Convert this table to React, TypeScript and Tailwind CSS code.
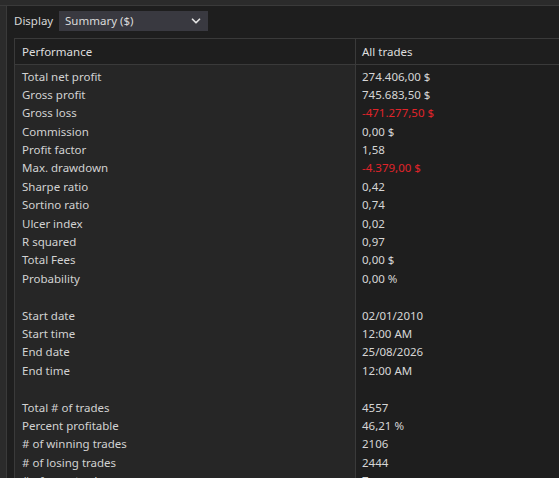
import { ChevronDown } from 'lucide-react';

type Row = { label: string; value: string; neg?: boolean } | null;

const rows: Row[] = [
  { label: 'Total net profit', value: '274.406,00 $' },
  { label: 'Gross profit', value: '745.683,50 $' },
  { label: 'Gross loss', value: '-471.277,50 $', neg: true },
  { label: 'Commission', value: '0,00 $' },
  { label: 'Profit factor', value: '1,58' },
  { label: 'Max. drawdown', value: '-4.379,00 $', neg: true },
  { label: 'Sharpe ratio', value: '0,42' },
  { label: 'Sortino ratio', value: '0,74' },
  { label: 'Ulcer index', value: '0,02' },
  { label: 'R squared', value: '0,97' },
  { label: 'Total Fees', value: '0,00 $' },
  { label: 'Probability', value: '0,00 %' },
  null,
  { label: 'Start date', value: '02/01/2010' },
  { label: 'Start time', value: '12:00 AM' },
  { label: 'End date', value: '25/08/2026' },
  { label: 'End time', value: '12:00 AM' },
  null,
  { label: 'Total # of trades', value: '4557' },
  { label: 'Percent profitable', value: '46,21 %' },
  { label: '# of winning trades', value: '2106' },
  { label: '# of losing trades', value: '2444' },
  { label: '# of even trades', value: '7' },
];

export default function App() {
  return (
    <div
      className="w-[559px] h-[478px] overflow-hidden bg-[#2b2b2b] text-[11.5px] flex flex-col"
      style={{ fontFamily: '"Noto Sans", "Open Sans", sans-serif' }}
    >
      {/* top strip */}
      <div className="h-[6px] shrink-0 border-b border-[#3a3a3a]" />
      <div className="flex flex-1 min-h-0">
        <div className="w-[7px] shrink-0 border-r border-[#3a3a3a]" />
        <div className="flex-1 min-w-0 bg-[#1e1e1e] pl-[7px] pt-[5px] flex flex-col">
          {/* Display selector */}
          <div className="flex items-center h-[20px]">
            <span className="text-[#d6d6d6] w-[45px]">Display</span>
            <div className="w-[149px] h-[20px] bg-[#393940] flex items-center justify-between pl-[6px] pr-[5px] text-[#dadada]">
              <span>Summary ($)</span>
              <ChevronDown size={14} strokeWidth={3} className="text-[#e0e0e0]" />
            </div>
          </div>

          {/* Table */}
          <div className="mt-[7px] border-l border-t border-[#3a3a3a] flex flex-col flex-1 min-h-0">
            <div className="flex h-[26px] shrink-0 border-b border-[#3a3a3a] text-[#dedede]">
              <div className="w-[341px] shrink-0 border-r border-[#3a3a3a] pl-[7px] pt-[1px] flex items-center">
                Performance
              </div>
              <div className="flex-1 pl-[6px] pt-[1px] flex items-center">All trades</div>
            </div>
            <div className="flex flex-1 min-h-0">
              <div className="w-[341px] shrink-0 border-r border-[#3a3a3a] bg-[#262626] pt-[2.5px] pl-[7px] text-[#d2d2d2]">
                {rows.map((r, i) => (
                  <div key={i} className="h-[18.4px] leading-[18.4px] whitespace-nowrap">
                    {r ? r.label : ''}
                  </div>
                ))}
              </div>
              <div className="flex-1 bg-[#1e1e1e] pt-[2.5px] pl-[6px] text-[#d6d6d6]">
                {rows.map((r, i) => (
                  <div
                    key={i}
                    className={`h-[18.4px] leading-[18.4px] whitespace-nowrap ${r && r.neg ? 'text-[#e0242a]' : ''}`}
                  >
                    {r ? r.value : ''}
                  </div>
                ))}
              </div>
            </div>
          </div>
        </div>
      </div>
    </div>
  );
}
